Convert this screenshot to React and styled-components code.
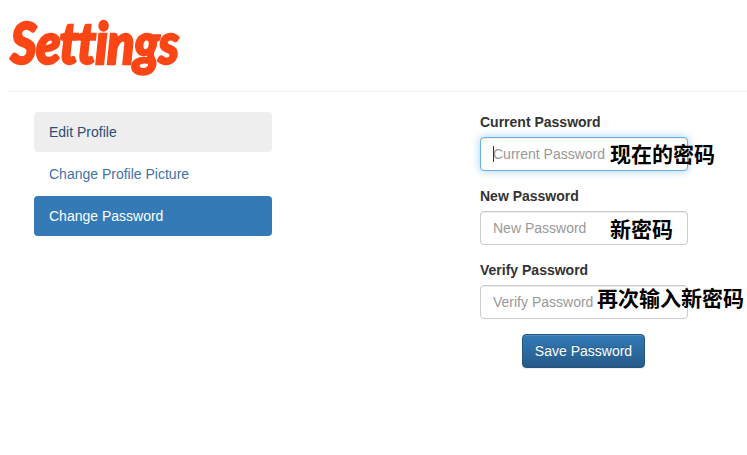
import React from "react";
import styled, { createGlobalStyle, css } from "styled-components";

const GlobalStyle = createGlobalStyle`
  *, *::before, *::after { box-sizing: border-box; }
  body {
    margin: 0;
    background: #fff;
    color: #333;
    font: 14px/20px "Liberation Sans", Arial, sans-serif;
    overflow: hidden;
  }
`;

const Page = styled.main`
  height: 455px;
  padding-left: 8px;
  overflow: hidden;
`;

const Header = styled.header`
  height: 92px;
  border-bottom: 1px solid #eee;
`;

const Title = styled.h1`
  width: max-content;
  margin: 0;
  padding: 7px 0 0 3px;
  color: #fc4615;
  font: italic 900 58px/70px Lato, "Open Sans", sans-serif;
  letter-spacing: -1px;
  -webkit-text-stroke: 2.4px #fc4615;
  transform: scaleX(0.87);
  transform-origin: 0 0;
`;

const Columns = styled.div`
  display: grid;
  grid-template-columns: 238px 208px;
  column-gap: 208px;
  align-items: start;
  padding: 20px 0 0 26px;
`;

const Nav = styled.nav`
  display: flex;
  flex-direction: column;
  gap: 2px;
`;

const variants = {
  hover: css`background: #eee; color: #2d4d73;`,
  plain: css`color: #3f73a5;`,
  active: css`background: #337ab7; color: #fff;`,
};

const NavLink = styled.a`
  padding: 10px 15px;
  border-radius: 4px;
  text-decoration: none;
  ${({ $variant }) => variants[$variant]}
`;

const Form = styled.form`
  display: flex;
  flex-direction: column;
  gap: 15px;
`;

const Field = styled.div`
  position: relative;
`;

const Label = styled.label`
  display: block;
  margin-bottom: 5px;
  font-weight: 700;
`;

const Input = styled.input`
  display: block;
  width: 100%;
  height: 34px;
  padding: 6px 12px;
  border: 1px solid ${({ $focused }) => ($focused ? "#66afe9" : "#ccc")};
  border-radius: 4px;
  outline: 0;
  background: #fff;
  color: #555;
  font: inherit;
  box-shadow: inset 0 1px 1px rgba(0, 0, 0, 0.075)
    ${({ $focused }) => $focused && ", 0 0 8px rgba(102, 175, 233, 0.6)"};

  &::placeholder { color: #999; opacity: 1; }
`;

const Caret = styled.span`
  position: absolute;
  left: 13px;
  top: 34px;
  width: 1px;
  height: 16px;
  background: #333;
`;

const Note = styled.span`
  position: absolute;
  left: ${({ $left }) => $left}px;
  top: ${({ $top }) => $top}px;
  color: #000;
  font: 700 21px/30px "Noto Sans CJK SC", sans-serif;
  white-space: nowrap;
  pointer-events: none;
`;

const SaveButton = styled.button`
  align-self: center;
  width: 123px;
  height: 34px;
  margin-right: 2px;
  padding: 0 0 0 1px;
  border: 1px solid #245580;
  border-radius: 4px;
  background: linear-gradient(#337ab7, #265a88);
  box-shadow: inset 0 1px 0 rgba(255, 255, 255, 0.15), 0 1px 1px rgba(0, 0, 0, 0.075);
  color: #fff;
  font: inherit;
  text-shadow: 0 -1px 0 rgba(0, 0, 0, 0.2);
`;

const links = [
  { text: "Edit Profile", variant: "hover" },
  { text: "Change Profile Picture", variant: "plain" },
  { text: "Change Password", variant: "active" },
];

const fields = [
  { id: "current", text: "Current Password", note: "现在的密码", left: 130, top: 26, focused: true },
  { id: "new", text: "New Password", note: "新密码", left: 130, top: 27 },
  { id: "verify", text: "Verify Password", note: "再次输入新密码", left: 117, top: 22 },
];

export default function App() {
  return (
    <Page>
      <GlobalStyle />
      <Header>
        <Title>Settings</Title>
      </Header>
      <Columns>
        <Nav>
          {links.map((link) => (
            <NavLink key={link.text} href="#" $variant={link.variant}>{link.text}</NavLink>
          ))}
        </Nav>
        <Form>
          {fields.map((field) => (
            <Field key={field.id}>
              <Label htmlFor={field.id}>{field.text}</Label>
              <Input id={field.id} type="password" placeholder={field.text} $focused={field.focused} />
              {field.focused && <Caret />}
              <Note $left={field.left} $top={field.top}>{field.note}</Note>
            </Field>
          ))}
          <SaveButton type="button">Save Password</SaveButton>
        </Form>
      </Columns>
    </Page>
  );
}
